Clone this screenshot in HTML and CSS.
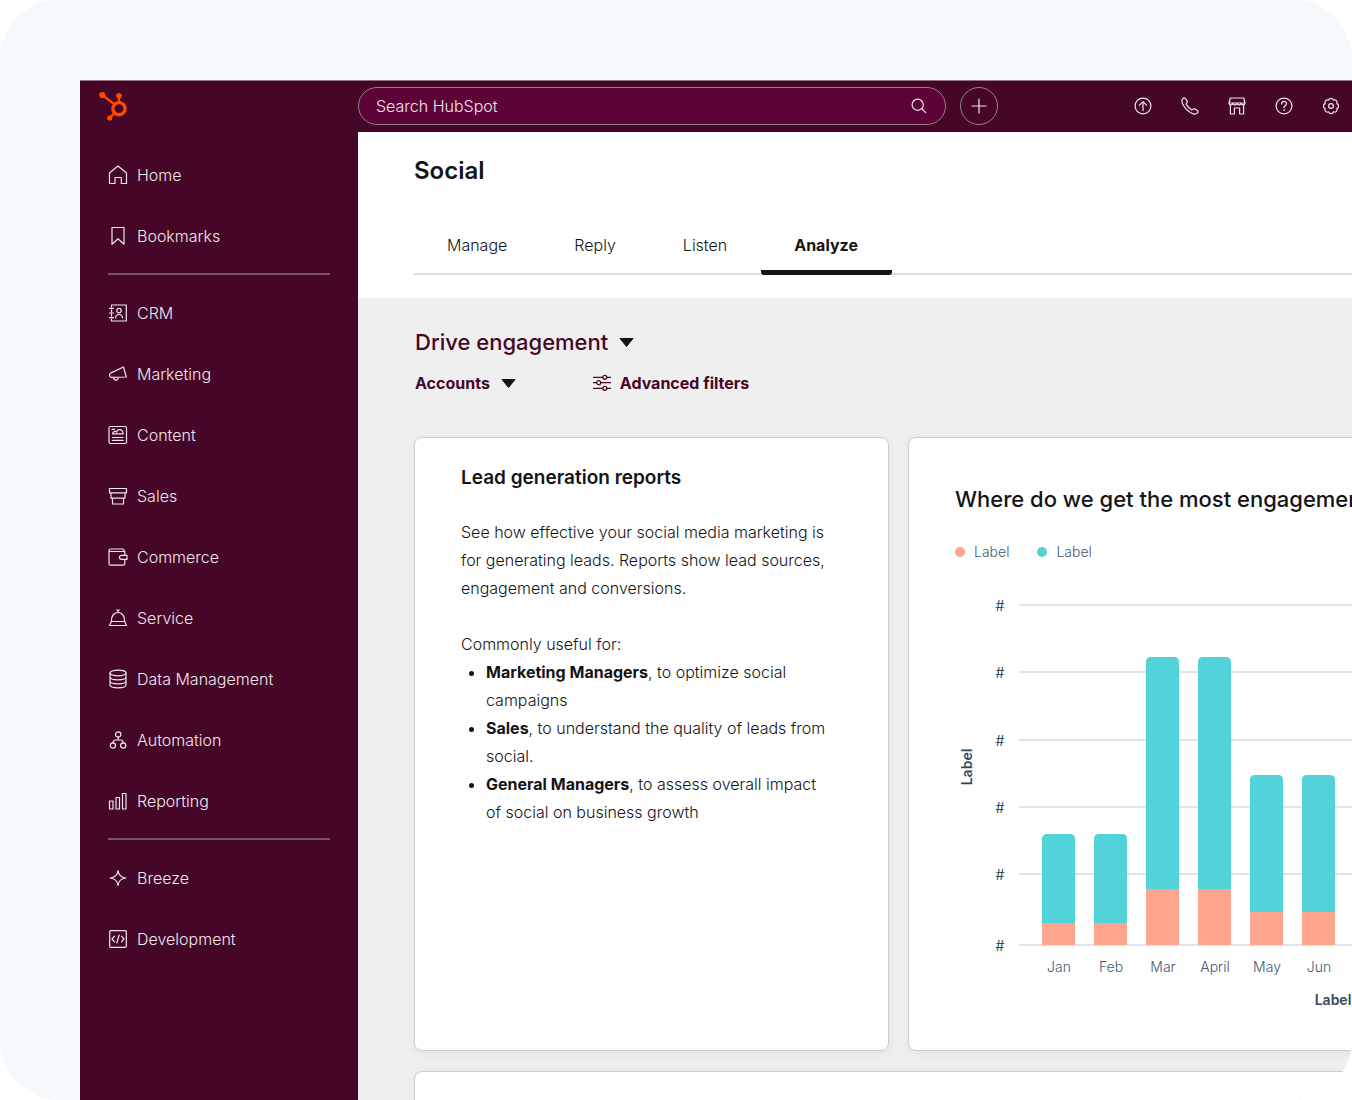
FILE: index.html
```html
<!DOCTYPE html>
<html lang="en">
<head>
    <meta charset="UTF-8">
    <meta name="viewport" content="width=device-width, initial-scale=1.0">
    <title>Social</title>
    <link rel="stylesheet" href="styles.css">
</head>
<body>
<div class="stage">
    <div class="app">
        <header class="topbar">
            <a class="logo" href="#" aria-label="HubSpot">
                <svg width="28" height="30" viewBox="0 0 28 30">
                    <g fill="none" stroke="#ff4800">
                        <circle cx="20" cy="17.7" r="6.1" stroke-width="3.4"/>
                        <path d="M20 5v7M4 4.500l11.500 8.800M11 26.500l4.500-4.300" stroke-width="2.300"/>
                    </g>
                    <g fill="#ff4800">
                        <circle cx="20" cy="4.800" r="2.800"/>
                        <circle cx="3.300" cy="4" r="3.100"/>
                        <circle cx="10.700" cy="27" r="2.600"/>
                    </g>
                </svg>
            </a>
            <form class="search">
                <input type="search" placeholder="Search HubSpot" aria-label="Search HubSpot">
                <button type="submit" aria-label="Search">
                    <svg class="icon" width="18" height="18" viewBox="0 0 18 18"><circle cx="7.700" cy="7.700" r="5.600"/><path d="M11.900 11.900l3.800 3.800"/></svg>
                </button>
            </form>
            <button class="add" type="button" aria-label="Create">
                <svg class="icon" width="16" height="16" viewBox="0 0 16 16"><path d="M8 1v14M1 8h14"/></svg>
            </button>
            <div class="tools">
                <button type="button" aria-label="Upgrades">
                    <svg class="icon" width="18" height="18" viewBox="0 0 18 18"><circle cx="9" cy="9" r="7.900"/><path d="M9 13.600V5M5.400 8.200L9 4.600l3.600 3.600"/></svg>
                </button>
                <button type="button" aria-label="Calling">
                    <svg class="icon" width="18" height="18" viewBox="0 0 18 18"><path d="M1.900 1.700C2.800.8 3.600.7 4.200 1.400l1.900 2.500c.5.700.3 1.300-.3 1.900-.8.700-.8 1.300-.2 2.100 1.200 1.800 2.700 3.300 4.500 4.500.8.600 1.400.6 2.100-.2.600-.6 1.200-.8 1.900-.3l2.500 1.900c.7.600.6 1.400-.3 2.300-1.300 1.300-3.300 1.200-5.600.1C6.500 14.100 3.900 11.500 1.800 7.300.7 5 .6 3 1.900 1.700z"/></svg>
                </button>
                <button type="button" aria-label="Marketplace">
                    <svg class="icon" width="18" height="18" viewBox="0 0 18 18"><path d="M2.200 1h13.600l1.200 5H1zM1 6c0 2.400 4 2.400 4 0 0 2.400 4 2.400 4 0 0 2.400 4 2.400 4 0 0 2.400 4 2.400 4 0M2.400 8v9h4v-6h5.200v6h4V8"/></svg>
                </button>
                <button type="button" aria-label="Help">
                    <svg class="icon" width="18" height="18" viewBox="0 0 18 18"><circle cx="9" cy="9" r="7.900"/><path d="M6.600 6.900c0-3.300 5-3.200 4.900-.2 0 1.900-2.500 1.900-2.500 4M9 12.700v.8"/></svg>
                </button>
                <button type="button" aria-label="Settings">
                    <svg class="icon" width="18" height="18" viewBox="0 0 18 18"><path d="M6.600 3.200a2.500 2.500 0 0 1 4.800 0a2.500 2.500 0 0 1 3.400 3.400a2.500 2.500 0 0 1 0 4.800a2.500 2.500 0 0 1-3.400 3.400a2.500 2.500 0 0 1-4.800 0a2.500 2.500 0 0 1-3.400-3.400a2.500 2.500 0 0 1 0-4.800a2.500 2.500 0 0 1 3.400-3.400z"/><circle cx="9" cy="9" r="2.400"/></svg>
                </button>
            </div>
        </header>

        <nav class="sidebar">
            <ul>
                <li><a href="#"><svg class="icon" width="20" height="20" viewBox="0 0 20 20"><path d="M1.500 18.500V8L10 1l8.500 7v10.500h-5.200v-6H7v6z"/></svg>Home</a></li>
                <li><a href="#"><svg class="icon" width="20" height="20" viewBox="0 0 20 20"><path d="M4 1.500h12v16.800l-6-5.600-6 5.600z"/></svg>Bookmarks</a></li>
            </ul>
            <hr>
            <ul>
                <li><a href="#"><svg class="icon" width="20" height="20" viewBox="0 0 20 20"><path d="M3.500 4V2h14.800v16H3.500v-2M3.500 6.800v2M3.500 11.200v2M1.500 5.300h4M1.500 10h4M1.500 14.700h4M7.500 14.800c.4-4.400 6.600-4.400 7 0"/><circle cx="11" cy="7.600" r="2.200"/></svg>CRM</a></li>
                <li><a href="#"><svg class="icon" width="20" height="20" viewBox="0 0 20 20"><path d="M15.500 3L3 8.900c-1.200.6-1.700 1.500-1.400 2.700.3 1.300 1.200 1.900 2.500 1.800L18.300 13zM5.500 13.500c.3 3.600 4.600 3.500 4.800-.2"/></svg>Marketing</a></li>
                <li><a href="#"><svg class="icon" width="20" height="20" viewBox="0 0 20 20"><rect x="1" y="1.500" width="17.500" height="17" rx="1.500"/><path d="M4.500 8.800c.4-2.500 2.900-2.800 4-1.800 1-3.600 6.500-3.200 6.600 1.800zM4 4.400h2.500M4.500 12.500h10.700M4.500 15.400h10.700"/></svg>Content</a></li>
                <li><a href="#"><svg class="icon" width="20" height="20" viewBox="0 0 20 20"><path d="M1.500 2.500h17v4.300h-17zM3 6.800h14v5.400H3zM4.500 12.200h11v5.800h-11z"/></svg>Sales</a></li>
                <li><a href="#"><svg class="icon" width="20" height="20" viewBox="0 0 20 20"><path d="M16.800 8V4.500H2.800C.4 4.500.4 2 2.800 2h11.700c1 0 1.600.7 1.600 2.500M1 3.500v13.200c0 .9.600 1.500 1.500 1.500h12.800c.9 0 1.500-.6 1.500-1.500v-3.900"/><path d="M13.500 8.300h5.500v4.100h-5.500a2 2 0 0 1 0-4.100z"/></svg>Commerce</a></li>
                <li><a href="#"><svg class="icon" width="20" height="20" viewBox="0 0 20 20"><path d="M3.300 13.500C2.800 1.500 17.200 1.500 16.700 13.500zM3.300 13.500L1.500 17.500h17l-1.800-4M10 4.500V2M8.700 2h2.600"/></svg>Service</a></li>
                <li><a href="#"><svg class="icon" width="20" height="20" viewBox="0 0 20 20"><ellipse cx="10" cy="4" rx="8" ry="2.800"/><path d="M2 4v12c0 3.700 16 3.700 16 0V4M2 8c0 3.700 16 3.700 16 0M2 12c0 3.700 16 3.700 16 0"/></svg>Data Management</a></li>
                <li><a href="#"><svg class="icon" width="20" height="20" viewBox="0 0 20 20"><circle cx="10.200" cy="4.500" r="2.700"/><circle cx="4.900" cy="15.500" r="2.600"/><circle cx="15.200" cy="15.500" r="2.600"/><path d="M10.200 7.200V10M5 12.900c0-2 .7-2.900 2.400-2.900h5.400c1.700 0 2.400.9 2.400 2.900"/></svg>Automation</a></li>
                <li><a href="#"><svg class="icon" width="20" height="20" viewBox="0 0 20 20"><path d="M1.500 10h3.500v8H1.500zM8 6.500h3.500V18H8zM14.500 2.500H18V18h-3.500z"/></svg>Reporting</a></li>
            </ul>
            <hr>
            <ul>
                <li><a href="#"><svg class="icon" width="20" height="20" viewBox="0 0 20 20"><path d="M10 2.500c.5 4.500 3 7 7.800 7.500-4.800.5-7.300 3-7.800 7.500-.5-4.500-3-7-7.800-7.500 4.800-.5 7.300-3 7.800-7.500z"/></svg>Breeze</a></li>
                <li><a href="#"><svg class="icon" width="20" height="20" viewBox="0 0 20 20"><rect x="1.700" y="1.700" width="16.600" height="16.600" rx="1"/><path d="M6.500 7.200L4 10l2.500 2.800M13.500 7.200L16 10l-2.500 2.800M11.200 6L8.800 14"/></svg>Development</a></li>
            </ul>
        </nav>

        <main>
            <section class="page-head">
                <h1>Social</h1>
                <div class="tabs">
                    <a href="#">Manage</a>
                    <a href="#">Reply</a>
                    <a href="#">Listen</a>
                    <a href="#" class="active">Analyze</a>
                </div>
            </section>

            <section class="content">
                <div class="filters">
                    <button class="view" type="button">Drive engagement
                        <svg width="15" height="9" viewBox="0 0 15 9"><path d="M1 .5h13L7.500 8.500z" fill="#141414" stroke="#141414" stroke-linejoin="round"/></svg>
                    </button>
                    <div class="filter-row">
                        <button type="button">Accounts
                            <svg width="15" height="9" viewBox="0 0 15 9"><path d="M1 .5h13L7.500 8.500z" fill="#141414" stroke="#141414" stroke-linejoin="round"/></svg>
                        </button>
                        <button class="advanced" type="button">
                            <svg class="icon" width="18" height="18" viewBox="0 0 18 18"><path d="M.5 3.300h9.200M14 3.300h3.500M.5 8.700h3M7.800 8.700h9.700M.5 14.300h9.200M14 14.300h3.500"/><circle cx="11.800" cy="3.300" r="2"/><circle cx="5.700" cy="8.700" r="2"/><circle cx="11.800" cy="14.300" r="2"/></svg>
                            Advanced filters
                        </button>
                    </div>
                </div>

                <div class="cards">
                    <article class="card about">
                        <h2>Lead generation reports</h2>
                        <p>See how effective your social media marketing is for generating leads. Reports show lead sources, engagement and conversions.</p>
                        <p>Commonly useful for:</p>
                        <ul>
                            <li><strong>Marketing Managers</strong>, to optimize social campaigns</li>
                            <li><strong>Sales</strong>, to understand the quality of leads from social.</li>
                            <li><strong>General Managers</strong>, to assess overall impact of social on business growth</li>
                        </ul>
                    </article>

                    <article class="card report">
                        <h2>Where do we get the most engagement</h2>
                        <div class="legend">
                            <span class="first">Label</span>
                            <span class="second">Label</span>
                        </div>
                        <svg class="chart" width="694" height="426" viewBox="0 0 694 426">
                            <!-- grid lines -->
                            <path class="grid" d="M64 15h630M64 82h630M64 150h630M64 217h630M64 284h630M64 355h630"/>
                            <g class="ticks">
                                <text x="45" y="21">#</text>
                                <text x="45" y="88">#</text>
                                <text x="45" y="156">#</text>
                                <text x="45" y="223">#</text>
                                <text x="45" y="290">#</text>
                                <text x="45" y="361">#</text>
                            </g>
                            <!-- upper part of each bar -->
                            <g class="teal">
                                <path d="M87 333v-84q0-5 5-5h23q5 0 5 5v84z"/>
                                <path d="M139 333v-84q0-5 5-5h23q5 0 5 5v84z"/>
                                <path d="M191 299V72q0-5 5-5h23q5 0 5 5v227z"/>
                                <path d="M243 299V72q0-5 5-5h23q5 0 5 5v227z"/>
                                <path d="M295 322V190q0-5 5-5h23q5 0 5 5v132z"/>
                                <path d="M347 322V190q0-5 5-5h23q5 0 5 5v132z"/>
                            </g>
                            <!-- lower part -->
                            <g class="salmon">
                                <path d="M87 333h33v22H87zM139 333h33v22h-33zM191 299h33v56h-33zM243 299h33v56h-33zM295 322h33v33h-33zM347 322h33v33h-33z"/>
                            </g>
                            <g class="months">
                                <text x="104" y="382">Jan</text>
                                <text x="156" y="382">Feb</text>
                                <text x="208" y="382">Mar</text>
                                <text x="260" y="382">April</text>
                                <text x="312" y="382">May</text>
                                <text x="364" y="382">Jun</text>
                            </g>
                            <text class="axis" x="378" y="415">Label</text>
                            <text class="axis" transform="translate(17 177) rotate(-90)">Label</text>
                        </svg>
                    </article>

                    <article class="card wide"></article>
                </div>
            </section>
        </main>
    </div>
</div>
</body>
</html>
```
FILE: styles.css
```css
* {
    box-sizing: border-box;
}
body {
    margin: 0;
    background: #fff;
    color: #141414;
    font-family: Inter, "Noto Sans", sans-serif;
    font-size: 16px;
    font-weight: 300;
}
h1, h2, p, ul {
    margin: 0;
    padding: 0;
}
a {
    color: inherit;
    text-decoration: none;
}
button {
    padding: 0;
    border: none;
    background: none;
    color: inherit;
    font: inherit;
    cursor: pointer;
}
svg {
    display: block;
    flex: none;
}
.icon {
    fill: none;
    stroke: currentColor;
    stroke-width: 1.2;
    stroke-linejoin: round;
    stroke-linecap: round;
}

.stage {
    height: 100vh;
    padding: 80px 0 0 80px;
    border-radius: 60px;
    background: #f5f9fc;
    overflow: hidden;
}
.app {
    display: grid;
    grid-template-columns: 278px minmax(0, 1fr);
    grid-template-rows: 52px 1fr;
    height: 100%;
}

/* top bar */
.topbar {
    grid-column: 1 / 3;
    display: flex;
    align-items: center;
    padding-right: 12px;
    background: #450628;
    box-shadow: inset 0 1px #957488;
    color: #f1e6ec;
}
.logo {
    width: 278px;
    padding-left: 19px;
}
.search {
    display: flex;
    align-items: center;
    flex: 0 1 588px;
    height: 38px;
    padding: 0 17px;
    border: 1px solid #94808c;
    border-radius: 19px;
    background: #5e0337;
}
.search input {
    flex: 1;
    min-width: 0;
    padding: 0;
    border: none;
    outline: none;
    background: none;
    color: inherit;
    font: inherit;
}
.search input::placeholder {
    color: #f1e6ec;
    opacity: 1;
}
.add {
    display: flex;
    align-items: center;
    justify-content: center;
    width: 38px;
    height: 38px;
    margin-left: 14px;
    border: 1px solid #94808c;
    border-radius: 50%;
}
.tools {
    display: flex;
    gap: 29px;
    margin-left: auto;
}

/* sidebar */
.sidebar {
    padding: 12px 28px;
    background: #450628;
    color: #f1e6ec;
}
.sidebar ul {
    list-style: none;
}
.sidebar a {
    display: flex;
    align-items: center;
    gap: 9px;
    height: 61px;
}
.sidebar hr {
    height: 2px;
    margin: 7px 0;
    border: none;
    background: #765468;
}

/* page head */
main {
    display: flex;
    flex-direction: column;
    min-height: 0;
    overflow: hidden;
    background: #efefef;
}
.page-head {
    padding: 23px 0 23px 56px;
    background: #fff;
}
.page-head h1 {
    font-size: 24px;
    line-height: 32px;
    font-weight: 600;
}
.tabs {
    display: flex;
    margin-top: 36px;
    border-bottom: 2px solid #dcdcdc;
}
.tabs a {
    height: 52px;
    margin-bottom: -2px;
    padding: 0 34px 0 33px;
    line-height: 44px;
}
.tabs .active {
    border-bottom: 5px solid #141414;
    border-radius: 3px;
    font-weight: 700;
}

/* content */
.content {
    padding: 28px 0 0 56px;
}
.filters {
    padding-left: 1px;
    color: #450628;
}
.filters button {
    display: flex;
    align-items: center;
    gap: 11px;
    font-weight: 700;
}
.filters .view {
    font-size: 22px;
    line-height: 32px;
    font-weight: 500;
}
.filter-row {
    display: flex;
    gap: 77px;
    margin-top: 13px;
    line-height: 24px;
}
.filters .advanced {
    gap: 9px;
}
.cards {
    display: grid;
    grid-template-columns: 475px minmax(744px, 1fr);
    grid-template-rows: 614px 120px;
    gap: 20px 19px;
    margin-top: 42px;
}
.card {
    padding: 26px 46px;
    border: 1px solid #ccc;
    border-radius: 8px;
    background: #fff;
    box-shadow: 0 2px 10px rgba(0, 0, 0, 0.06);
}
.wide {
    grid-column: 1 / 3;
}
.about {
    line-height: 28px;
}
.about h2 {
    margin-bottom: 26px;
    font-size: 19px;
    font-weight: 600;
}
.about p + p {
    margin-top: 28px;
}
.about ul {
    padding: 0 10px 0 25px;
}
.about strong {
    font-weight: 700;
}
.report h2 {
    margin-top: 19px;
    font-size: 22px;
    line-height: 32px;
    font-weight: 500;
    white-space: nowrap;
}
.legend {
    display: flex;
    gap: 28px;
    margin-top: 26px;
    color: #425b76;
    font-size: 14px;
    line-height: 22px;
}
.legend span {
    display: flex;
    align-items: center;
    gap: 9px;
}
.legend span::before {
    content: "";
    width: 10px;
    height: 10px;
    border-radius: 50%;
    background: #ffa58e;
}
.legend .second::before {
    background: #51d3d9;
}
.chart {
    margin-top: 27px;
    font-size: 14px;
    text-anchor: middle;
}
.grid {
    stroke: #dfe3eb;
    stroke-width: 2;
}
.ticks {
    fill: #33475b;
    font-weight: 400;
}
.teal {
    fill: #51d3d9;
}
.salmon {
    fill: #ffa58e;
}
.months {
    fill: #425b76;
}
.axis {
    fill: #33475b;
    font-weight: 600;
}
```
